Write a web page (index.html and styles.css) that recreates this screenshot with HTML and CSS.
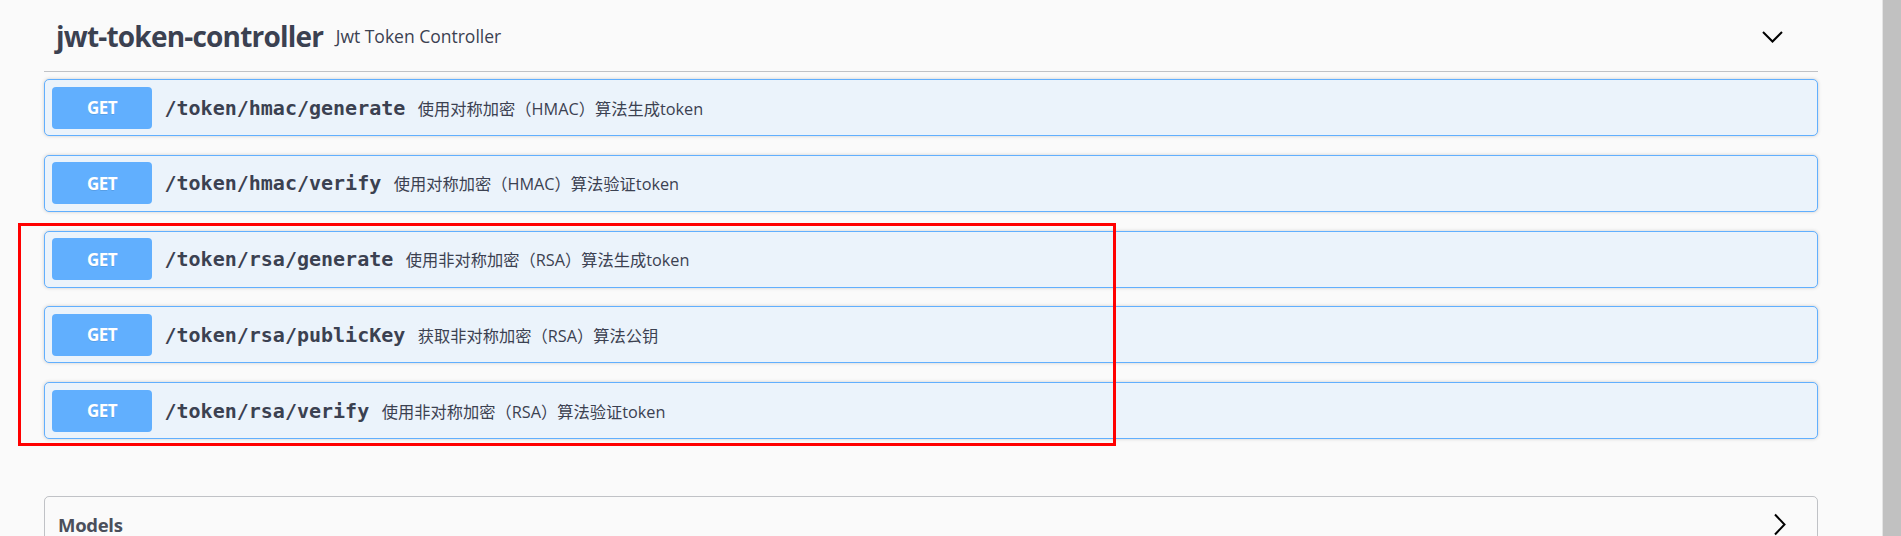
FILE: index.html
```html
<!DOCTYPE html>
<html lang="zh-CN">
<head>
<meta charset="utf-8">
<title>jwt-token-controller</title>
<link rel="stylesheet" href="styles.css">
</head>
<body>
<div class="page">
  <section class="tag-section">
    <div class="tag-header">
      <h3 class="tag-name">jwt-token-controller</h3>
      <small class="tag-desc">Jwt Token Controller</small>
      <svg class="arrow" width="25" height="25" viewBox="0 0 25 25"><polyline points="3,8 12.5,17.5 22,8" fill="none" stroke="#000" stroke-width="2"/></svg>
    </div>
    <div class="opblocks">
      <div class="opblock">
        <span class="method">GET</span>
        <span class="path">/token/hmac/generate</span>
        <span class="desc">使用对称加密（HMAC）算法生成token</span>
      </div>
      <div class="opblock">
        <span class="method">GET</span>
        <span class="path">/token/hmac/verify</span>
        <span class="desc">使用对称加密（HMAC）算法验证token</span>
      </div>
      <div class="opblock">
        <span class="method">GET</span>
        <span class="path">/token/rsa/generate</span>
        <span class="desc">使用非对称加密（RSA）算法生成token</span>
      </div>
      <div class="opblock">
        <span class="method">GET</span>
        <span class="path">/token/rsa/publicKey</span>
        <span class="desc">获取非对称加密（RSA）算法公钥</span>
      </div>
      <div class="opblock">
        <span class="method">GET</span>
        <span class="path">/token/rsa/verify</span>
        <span class="desc">使用非对称加密（RSA）算法验证token</span>
      </div>
    </div>
  </section>
  <section class="models">
    <h4 class="models-title">
      <span>Models</span>
      <svg class="arrow-right" width="25" height="25" viewBox="0 0 25 25"><polyline points="8,2.5 17.5,12.5 8,22.5" fill="none" stroke="#000" stroke-width="2"/></svg>
    </h4>
  </section>
  <div class="highlight"></div>
</div>
<div class="scrollbar"></div>
</body>
</html>
```

FILE: styles.css
```css
html, body {
  margin: 0;
  height: 536px;
  overflow: hidden;
}
body {
  display: flex;
  background: #fafafa;
  font-family: "Open Sans", "Noto Sans CJK SC", sans-serif;
  color: #3b4151;
}
.page {
  flex: 1;
  position: relative;
  padding: 0 64px 0 44px;
}
.scrollbar {
  width: 18px;
  flex: none;
  background: #c1c1c1;
  border-left: 1px solid #e4e4e4;
}
.tag-header {
  height: 71px;
  display: flex;
  align-items: center;
  padding: 0 0 0 12px;
  border-bottom: 1px solid rgba(59, 65, 81, 0.3);
}
.tag-name {
  margin: 0;
  font-size: 28px;
  font-weight: 700;
  letter-spacing: -0.8px;
  color: #3b4151;
}
.tag-desc {
  flex: 1;
  padding: 0 12.5px;
  font-size: 17.5px;
  color: #3b4151;
}
.arrow {
  margin-right: 33px;
  margin-top: 1px;
}
.opblocks {
  margin-top: 7px;
  display: flex;
  flex-direction: column;
  gap: 18.75px;
}
.opblock {
  display: flex;
  align-items: center;
  padding: 6.5px 7px;
  border: 1px solid #61affe;
  border-radius: 5px;
  background: #ebf3fb;
  box-shadow: 0 0 3.75px rgba(0, 0, 0, 0.19);
}
.method {
  width: 100px;
  height: 42px;
  display: flex;
  align-items: center;
  justify-content: center;
  background: #61affe;
  border-radius: 4px;
  color: #fff;
  font-size: 17px;
  font-weight: 700;
  letter-spacing: -0.5px;
  text-shadow: 0 1px 0 rgba(0, 0, 0, 0.1);
}
.path {
  padding: 0 12.5px;
  font-family: "DejaVu Sans Mono", monospace;
  font-weight: 700;
  font-size: 20px;
  color: #3b4151;
}
.desc {
  font-size: 16.25px;
  color: #3b4151;
}
.models {
  margin-top: 57px;
  border: 1px solid rgba(59, 65, 81, 0.3);
  border-radius: 5px;
  height: 100px;
}
.models-title {
  margin: 0;
  display: flex;
  align-items: center;
  justify-content: space-between;
  padding: 14.5px 25px 12.5px 13px;
  font-size: 18.5px;
  font-weight: 700;
  letter-spacing: -0.3px;
  color: #4a4f5b;
}
.highlight {
  position: absolute;
  left: 18px;
  top: 223px;
  width: 1098px;
  height: 223px;
  box-sizing: border-box;
  border: 3px solid #ff0000;
}
```
